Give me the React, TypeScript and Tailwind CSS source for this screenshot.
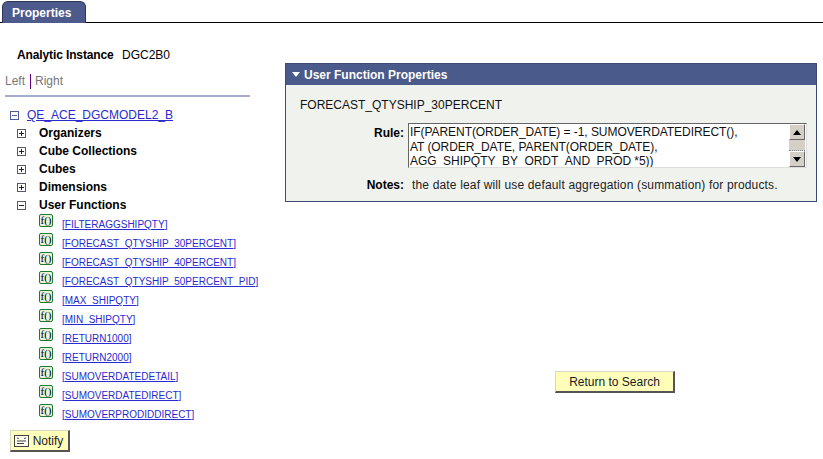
import { useState } from 'react';

const sections = ['Organizers', 'Cube Collections', 'Cubes', 'Dimensions'];

const functions = [
  'FILTERAGGSHIPQTY',
  'FORECAST_QTYSHIP_30PERCENT',
  'FORECAST_QTYSHIP_40PERCENT',
  'FORECAST_QTYSHIP_50PERCENT_PID',
  'MAX_SHIPQTY',
  'MIN_SHIPQTY',
  'RETURN1000',
  'RETURN2000',
  'SUMOVERDATEDETAIL',
  'SUMOVERDATEDIRECT',
  'SUMOVERPRODIDDIRECT',
];

const ruleText = `IF(PARENT(ORDER_DATE) = -1, SUMOVERDATEDIRECT(),
AT (ORDER_DATE, PARENT(ORDER_DATE),
AGG_SHIPQTY_BY_ORDT_AND_PROD *5))`;

function TreeToggle({ open, dark }: { open: boolean; dark?: boolean }) {
  const color = dark ? '#222222' : '#4a5a9a';
  return (
    <svg width="9" height="9" viewBox="0 0 9 9" className="shrink-0">
      <rect x="0.5" y="0.5" width="8" height="8" fill="#fff" stroke={dark ? '#555a70' : color} />
      <path d="M2 4.5H7" stroke={color} />
      {!open && <path d="M4.5 2V7" stroke={color} />}
    </svg>
  );
}

function FnIcon() {
  return (
    <span className="w-[14px] h-[13px] shrink-0 flex items-center justify-center border border-[#1d7a2a] rounded-[2px] bg-[#e6f4dc] font-['Liberation_Serif',serif] text-[11px] leading-none text-black">
      f()
    </span>
  );
}

function ScrollArrow({ up }: { up?: boolean }) {
  return (
    <div className="w-[16px] h-[16px] flex items-center justify-center bg-[#d4d0c8] border-r border-b border-[#666] border-t-white border-l-white border-t border-l">
      <svg width="8" height="5" viewBox="0 0 8 5">
        <path d={up ? 'M4 0L8 5H0Z' : 'M4 5L8 0H0Z'} fill="#000" />
      </svg>
    </div>
  );
}

function YellowButton({ children, className }: { children: React.ReactNode; className?: string }) {
  return (
    <button
      className={`bg-[#ffffb9] border border-t-[#d8d8c0] border-l-[#d8d8c0] border-r-2 border-b-2 border-r-[#555] border-b-[#555] text-[12px] text-[#1a1a2a] flex items-center justify-center ${className ?? ''}`}
    >
      {children}
    </button>
  );
}

export default function App() {
  const [side] = useState('Left');

  return (
    <div className="w-[823px] h-[459px] overflow-hidden bg-white font-['Liberation_Sans',Arial,sans-serif] text-[12px] text-black flex flex-col">
      {/* Tab bar */}
      <div className="h-[23px] pt-px pl-[2px] border-b border-black shrink-0 flex">
        <div className="w-[84px] h-[22px] bg-[#4d5a8c] border border-b-0 border-[#2c3555] rounded-t-[6px] pl-[9px] text-white font-bold text-[12px] leading-[23px]">
          Properties
        </div>
      </div>

      <div className="flex flex-1">
        {/* Left column */}
        <div className="w-[285px] shrink-0 flex flex-col">
          <div className="flex mt-[25px] pl-[17px] h-[14px] leading-[14px]">
            <span className="font-bold w-[105px] text-[12px] tracking-[-0.12px]">Analytic Instance</span>
            <span>DGC2B0</span>
          </div>

          <div className="flex items-center mt-[12px] ml-[5px] h-[14px] text-[#777777] leading-[14px]">
            <span className={side === 'Left' ? 'text-[#777777]' : ''}>Left</span>
            <span className="w-px h-[15px] bg-[#600080] mx-[4px] ml-[5px]" />
            <span>Right</span>
          </div>

          <div className="h-[2px] bg-[#a3aed0] mt-[7px] ml-[5px] w-[245px]" />

          {/* Tree */}
          <div className="flex items-center mt-[11px] ml-[10px] h-[14px]">
            <TreeToggle open />
            <a href="#" className="ml-[8px] text-[#2a2ad0] underline">
              QE_ACE_DGCMODEL2_B
            </a>
          </div>

          <div className="flex flex-col mt-[2px] ml-[17px]">
            {sections.map((name) => (
              <div key={name} className="h-[18px] flex items-center gap-[13px]">
                <TreeToggle open={false} dark />
                <span className="font-bold">{name}</span>
              </div>
            ))}
            <div className="h-[18px] flex items-center gap-[13px]">
              <TreeToggle open dark />
              <span className="font-bold">User Functions</span>
            </div>
          </div>

          <div className="flex flex-col ml-[39px]">
            {functions.map((fn) => (
              <div key={fn} className="h-[19px] flex gap-[9px]">
                <FnIcon />
                <a href="#" className="mt-[3px] text-[10px] leading-[15px] text-[#2a2ad0] underline whitespace-nowrap">
                  [{fn}]
                </a>
              </div>
            ))}
          </div>

          <YellowButton className="w-[60px] h-[22px] ml-[10px] mt-[7px] gap-[4px] pr-[2px]">
            <svg width="15" height="12" viewBox="0 0 15 12" className="shrink-0">
              <rect x="0.5" y="0.5" width="14" height="11" fill="#fffff0" stroke="#444" />
              <path d="M3 6H12M3 8.5H10" stroke="#444" />
              <path d="M3 3L5 3.5M12 3L10 3.5" stroke="#444" />
            </svg>
            Notify
          </YellowButton>
        </div>

        {/* Right column */}
        <div className="w-[532px] flex flex-col">
          <div className="mt-[40px] h-[139px] bg-[#f0f2ee] border border-[#3b4a78] flex flex-col">
            <div className="h-[21px] shrink-0 bg-[#4a5a8a] flex items-center pl-[6px] gap-[3px] text-white font-bold">
              <svg width="9" height="5" viewBox="0 0 9 5">
                <path d="M0 0H8L4 5Z" fill="#fff" />
              </svg>
              User Function Properties
            </div>

            <div className="mt-[13px] ml-[14px] h-[14px] leading-[14px] text-[#111]">
              FORECAST_QTYSHIP_30PERCENT
            </div>

            <div className="flex mt-[11px]">
              <span className="w-[118px] text-right font-bold pt-[3px] leading-[14px]">Rule:</span>
              <div className="relative ml-[4px] w-[399px] h-[45px] bg-white border border-t-[#666] border-l-[#666] border-r-[#ddd] border-b-[#ddd] flex overflow-hidden">
                <pre className="flex-1 pl-[1px] pt-[1px] font-['Liberation_Sans',Arial,sans-serif] text-[12px] leading-[14.5px] tracking-[-0.06px] text-[#111]">
                  {ruleText}
                </pre>
                <div className="w-[16px] mr-px flex flex-col justify-between">
                  <ScrollArrow up />
                  <div className="flex-1 bg-[#d4d0c8] border-b border-dotted border-[#888]" />
                  <ScrollArrow />
                </div>
              </div>
            </div>

            <div className="flex mt-[10px] leading-[14px]">
              <span className="w-[118px] text-right font-bold">Notes:</span>
              <span className="ml-[8px] text-[#222] tracking-[0.16px] whitespace-nowrap">
                the date leaf will use default aggregation (summation) for products.
              </span>
            </div>
          </div>

          <YellowButton className="w-[120px] h-[22px] ml-[270px] mt-[169px]">Return to Search</YellowButton>
        </div>
      </div>
    </div>
  );
}
